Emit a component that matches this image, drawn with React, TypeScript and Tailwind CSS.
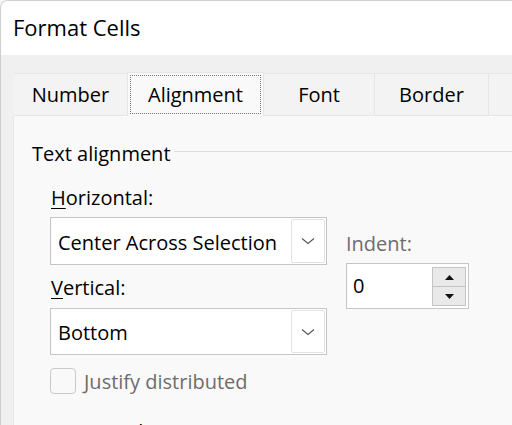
import React from "react";

const font = { fontFamily: '"Open Sans", "Noto Sans", sans-serif' };

function Chevron() {
  return (
    <svg width="14" height="8" viewBox="0 0 14 8" fill="none">
      <path d="M1 1.5 L7 6.5 L13 1.5" stroke="#555" strokeWidth="1.1" />
    </svg>
  );
}

function Select({ value, h, pt }: { value: string; h: string; pt: string }) {
  return (
    <div className={`relative flex items-center w-[277px] ${h} border border-[#c6c6c6] bg-white`}>
      <span className={`pl-[7px] ${pt} text-[20px] leading-[24px] text-black`}>{value}</span>
      <div className="absolute right-[1px] top-[1px] bottom-[1px] w-[34px] rounded-[2px] border border-[#e3e3e3] bg-white flex items-center justify-center">
        <Chevron />
      </div>
    </div>
  );
}

export default function App() {
  return (
    <div className="w-[512px] h-[425px] overflow-hidden bg-[#f6f6f6]" style={font}>
      <div className="flex flex-col h-full rounded-tl-[8px] border-t border-l border-[#cfcfcf] overflow-hidden">
        <div className="h-[54px] shrink-0 bg-white flex items-start pl-[12px] pt-[12px]">
          <span className="text-[22px] leading-[28px] text-black">Format Cells</span>
        </div>
        <div className="flex-1 bg-[#f0f0f0] pl-[12px] pt-[17px]">
          {/* tabs */}
          <div className="flex h-[44px] items-stretch">
            <div className="w-[113px] mt-[1px] ml-[1px] bg-[#f3f3f3] border-t border-[#e6e6e6] border-b flex items-center justify-center pt-[1px] text-[20px] leading-[24px] text-black">
              Number
            </div>
            <div className="w-[137px] bg-[#f9f9f9] border-l border-r border-t border-[#e6e6e6] flex p-[2px]">
              <div className="flex-1 border border-dotted border-[#7a7a7a] flex items-center justify-center pt-[1px] text-[20px] leading-[24px] text-black">
                Alignment
              </div>
            </div>
            <div className="w-[111px] mt-[1px] bg-[#f3f3f3] border-t border-b border-r border-[#e6e6e6] flex items-center justify-center pt-[1px] text-[20px] leading-[24px] text-black">
              Font
            </div>
            <div className="w-[114px] mt-[1px] bg-[#f3f3f3] border-t border-b border-r border-[#e6e6e6] flex items-center justify-center pt-[1px] text-[20px] leading-[24px] text-black">
              Border
            </div>
            <div className="flex-1 mt-[1px] bg-[#f3f3f3] border-t border-b border-[#e6e6e6]" />
          </div>
          {/* panel */}
          <div className="h-[400px] bg-[#f9f9f9] border-l border-[#e6e6e6] pl-[18px] pt-[26px]">
            <div className="flex items-start">
              <span className="text-[20px] leading-[24px] text-black">Text alignment</span>
              <div className="flex-1 h-px bg-[#dcdcdc] mt-[9px] ml-[3px]" />
            </div>
            <div className="flex pl-[18px] mt-[20px]">
              <div className="flex flex-col">
                <span className="pl-[1px] text-[20px] leading-[24px] text-black">
                  <span className="underline underline-offset-[3px] decoration-1">H</span>orizontal:
                </span>
                <div className="mt-[7px]">
                  <Select value="Center Across Selection" h="h-[48px]" pt="pt-[4px]" />
                </div>
                <span className="mt-[11px] pl-[1px] text-[20px] leading-[24px] text-black">
                  <span className="underline underline-offset-[3px] decoration-1">V</span>ertical:
                </span>
                <div className="mt-[8px]">
                  <Select value="Bottom" h="h-[47px]" pt="pt-[3px]" />
                </div>
                <div className="flex items-center mt-[12px]">
                  <div className="w-[26px] h-[26px] rounded-[4px] border border-[#c9c9c9] bg-[#f9f9f9]" />
                  <span className="ml-[8px] pt-[3px] text-[20px] leading-[24px] text-[#6d6d6d]">Justify distributed</span>
                </div>
              </div>
              <div className="flex flex-col ml-[19px] mt-[46px]">
                <span className="text-[20px] leading-[24px] text-[#6d6d6d]">Indent:</span>
                <div className="relative mt-[7px] w-[123px] h-[46px] border border-[#c6c6c6] bg-white flex items-center">
                  <span className="pl-[6px] text-[20px] leading-[24px] text-black">0</span>
                  <div className="absolute right-[2px] top-[3px] bottom-[2px] w-[34px] flex flex-col">
                    <div className="flex-1 border border-[#c4c4c4] bg-[#e9e9e9] flex items-center justify-center">
                      <svg width="9" height="5" viewBox="0 0 9 5"><path d="M0 5 L4.5 0 L9 5 Z" fill="#111" /></svg>
                    </div>
                    <div className="flex-1 border border-t-0 border-[#c4c4c4] bg-[#e9e9e9] flex items-center justify-center">
                      <svg width="9" height="5" viewBox="0 0 9 5"><path d="M0 0 L4.5 5 L9 0 Z" fill="#111" /></svg>
                    </div>
                  </div>
                </div>
              </div>
            </div>
            <div className="mt-[26px] text-[20px] leading-[24px] text-black">Text control</div>
          </div>
        </div>
      </div>
    </div>
  );
}
